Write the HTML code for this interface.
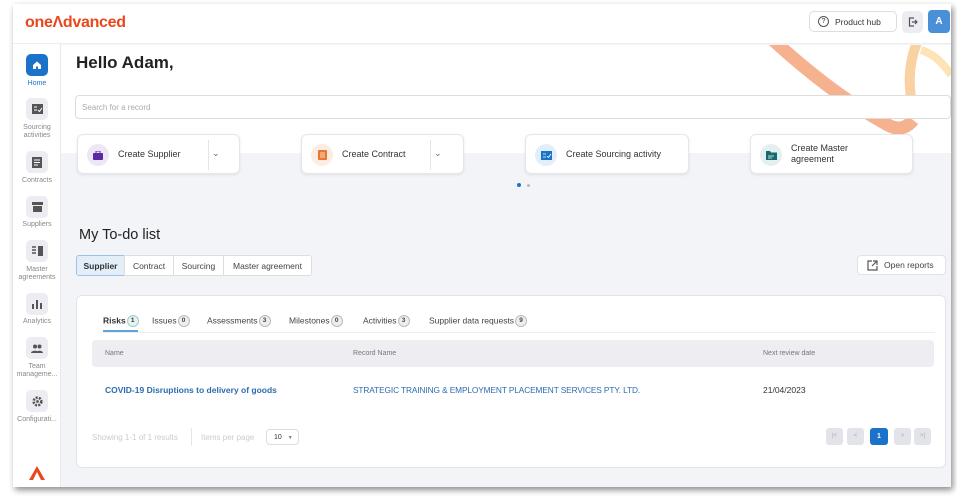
<!DOCTYPE html>
<html><head><style>
*{box-sizing:border-box;margin:0;padding:0}
body{width:957px;height:500px;background:#fff;font-family:"Liberation Sans",sans-serif;position:relative;overflow:hidden;color:#333}
.app{position:absolute;left:13px;top:4px;width:938px;height:483px;background:#f3f4f8;box-shadow:2px 3px 6px rgba(0,0,0,.45);overflow:hidden}
.hdr{position:absolute;left:0;top:0;width:938px;height:40px;background:#fff;border-bottom:1px solid #eee}
.side{position:absolute;left:0;top:40px;width:48px;height:443px;background:#fff;border-right:1px solid #e8e8ee}
.ab{position:absolute}
.si{position:absolute;left:13px;width:22px;height:22px;border-radius:5px;background:#ececf2;display:flex;align-items:center;justify-content:center}
.sl{position:absolute;left:0;width:48px;text-align:center;font-size:7px;color:#888;line-height:8px}
.card{position:absolute;top:130px;height:40px;background:#fff;border:1px solid #e6e6ea;border-radius:6px;box-shadow:0 1px 3px rgba(0,0,0,.08);font-size:9px;color:#333}
.ci{position:absolute;left:9px;top:9px;width:22px;height:22px;border-radius:50%;display:flex;align-items:center;justify-content:center}
.tab{position:absolute;top:251px;height:21px;border:1px solid #ddd;background:#fff;font-size:8.5px;display:flex;align-items:center;justify-content:center;color:#444}
.st{position:absolute;top:311px;font-size:8.5px;color:#444}
.b{display:inline-block;width:12px;height:12px;border:1px solid #bbb;border-radius:50%;background:#eee;font-size:6.5px;text-align:center;line-height:10px;font-weight:bold;margin-left:1px;vertical-align:middle}
.pg{position:absolute;top:424px;width:17px;height:17px;border-radius:3px;background:#e3e4ea;font-size:6px;color:#aaa;text-align:center;line-height:17px}
</style></head><body>
<div class="app">
 <div style="position:absolute;left:48px;top:41px;width:890px;height:108px;background:#fff"></div>
 <svg class="ab" style="left:700px;top:41px" width="238" height="100"><path d="M60 -5 Q120 50 175 80 Q190 88 200 75" stroke="#f4a37a" stroke-width="13" fill="none" opacity=".85"/><path d="M205 -5 Q190 30 202 70" stroke="#f9c58a" stroke-width="10" fill="none" opacity=".8"/><path d="M208 5 Q225 10 238 30" stroke="#fbd79a" stroke-width="8" fill="none" opacity=".7"/></svg>
 <div class="hdr">
  <div class="ab" style="left:12px;top:10px;font-size:16px;font-weight:bold;color:#e8481c;letter-spacing:-.3px">one&#923;dvanced</div>
  <div class="ab" style="left:796px;top:7px;width:88px;height:21px;border:1px solid #ddd;border-radius:5px;font-size:8.5px;color:#333;display:flex;align-items:center;padding-left:8px"><span style="display:inline-block;width:11px;height:11px;border:1.3px solid #555;border-radius:50%;font-size:7px;text-align:center;line-height:9px;margin-right:6px">?</span>Product hub</div>
  <div class="ab" style="left:889px;top:7px;width:21px;height:22px;background:#ececf2;border-radius:5px;display:flex;align-items:center;justify-content:center"><svg width="10" height="10"><path d="M6 1H1.5v8H6M4 5h5M7 3l2 2-2 2" stroke="#555" fill="none" stroke-width="1.2"/></svg></div>
  <div class="ab" style="left:915px;top:6px;width:22px;height:23px;background:#4a90d9;border-radius:4px;color:#fff;font-weight:bold;font-size:10px;text-align:center;line-height:23px">A</div>
 </div>
 <div class="side">
  <div class="si" style="top:10px;background:#1a73c8"><svg width="10" height="10"><path d="M1 5L5 1.5 9 5V9H6V6.5H4V9H1Z" fill="#fff"/></svg></div>
  <div class="sl" style="top:36px;color:#1a73c8">Home</div>
  <div class="si" style="top:54px"><svg width="11" height="10"><rect x="0" y="0" width="11" height="10" fill="#555"/><path d="M2 3h3M2 6h3M6 6l1.5 1.5L10 4" stroke="#fff" fill="none"/></svg></div>
  <div class="sl" style="top:80px">Sourcing<br>activities</div>
  <div class="si" style="top:107px"><svg width="10" height="11"><rect width="10" height="11" fill="#555"/><path d="M2 3h6M2 5.5h6M2 8h4" stroke="#fff"/></svg></div>
  <div class="sl" style="top:133px">Contracts</div>
  <div class="si" style="top:152px"><svg width="11" height="10"><path d="M0 0h11v3H0zM1 4h9v6H1z" fill="#555"/></svg></div>
  <div class="sl" style="top:177px">Suppliers</div>
  <div class="si" style="top:196px"><svg width="11" height="10"><path d="M0 1h4M0 4h4M0 7h4" stroke="#555" stroke-width="1.5"/><rect x="6" y="0" width="5" height="10" fill="#555"/></svg></div>
  <div class="sl" style="top:222px">Master<br>agreements</div>
  <div class="si" style="top:249px"><svg width="10" height="10"><path d="M1 10V5M5 10V1M9 10V4" stroke="#555" stroke-width="2"/></svg></div>
  <div class="sl" style="top:274px">Analytics</div>
  <div class="si" style="top:293px"><svg width="12" height="9"><circle cx="4" cy="2.5" r="2" fill="#555"/><circle cx="8.5" cy="2.5" r="2" fill="#555"/><path d="M0 9c0-3 8-3 8 0zM5 9c0-3 7-3 7 0z" fill="#555"/></svg></div>
  <div class="sl" style="top:319px">Team<br>manageme...</div>
  <div class="si" style="top:346px"><svg width="11" height="11"><circle cx="5.5" cy="5.5" r="3.8" fill="none" stroke="#555" stroke-width="2.6" stroke-dasharray="2 1.2"/><circle cx="5.5" cy="5.5" r="1.4" fill="#555"/></svg></div>
  <div class="sl" style="top:372px">Configurati...</div>
  <svg class="ab" style="left:16px;top:420px" width="16" height="16"><path d="M0 16L8 2 16 16H12L8 8 4 16Z" fill="#e8481c"/></svg>
 </div>
 <div class="ab" style="left:63px;top:49px;font-size:17px;font-weight:bold;color:#222">Hello Adam,</div>
 <div class="ab" style="left:62px;top:91px;width:876px;height:24px;background:#fff;border:1px solid #ddd;border-radius:4px;font-size:8px;color:#aaa;padding:7px 6px">Search for a record</div>
 <div class="card" style="left:64px;width:163px"><div class="ci" style="background:#ede6f7"><svg width="10" height="9"><rect y="2" width="10" height="7" rx="1" fill="#5b2a9e"/><rect x="3" y="0" width="4" height="3" fill="none" stroke="#5b2a9e"/></svg></div><span class="ab" style="left:40px;top:14px">Create Supplier</span><div class="ab" style="left:130px;top:5px;width:1px;height:30px;background:#e4e4e4"></div><span class="ab" style="left:134px;top:13px;color:#666;font-size:9px">&#8964;</span></div>
 <div class="card" style="left:288px;width:163px"><div class="ci" style="background:#fdece1"><svg width="9" height="10"><rect width="9" height="10" rx="1" fill="#e9772f"/><path d="M2 3h5M2 5h5M2 7h5" stroke="#fff" stroke-width=".8"/></svg></div><span class="ab" style="left:40px;top:14px">Create Contract</span><div class="ab" style="left:128px;top:5px;width:1px;height:30px;background:#e4e4e4"></div><span class="ab" style="left:132px;top:13px;color:#666;font-size:9px">&#8964;</span></div>
 <div class="card" style="left:512px;width:164px"><div class="ci" style="background:#e2eefb"><svg width="11" height="9"><rect width="11" height="9" fill="#1a73c8"/><path d="M2 3h3M2 6h3M6 5l1.5 1.5L10 3" stroke="#fff" fill="none" stroke-width=".8"/></svg></div><span class="ab" style="left:40px;top:14px">Create Sourcing activity</span></div>
 <div class="card" style="left:737px;width:163px"><div class="ci" style="background:#e3f0ef"><svg width="11" height="9"><path d="M0 0h4l1 1.5h6V9H0z" fill="#156b6b"/><path d="M2 5h6M2 7h4" stroke="#fff" stroke-width=".8"/></svg></div><span class="ab" style="left:40px;top:8px;line-height:11px">Create Master<br>agreement</span></div>
 <div class="ab" style="left:504px;top:179px;width:4px;height:4px;border-radius:50%;background:#1a73c8"></div>
 <div class="ab" style="left:514px;top:180px;width:3px;height:3px;border-radius:50%;background:#bbb"></div>
 <div class="ab" style="left:66px;top:223px;font-size:14.5px;color:#222">My To-do list</div>
 <div class="tab" style="left:63px;width:49px;background:#e3eef9;border-color:#9cc2e6;border-radius:3px 0 0 3px;font-weight:bold;color:#333">Supplier</div>
 <div class="tab" style="left:111px;width:50px">Contract</div>
 <div class="tab" style="left:160px;width:51px">Sourcing</div>
 <div class="tab" style="left:210px;width:89px;border-radius:0 3px 3px 0">Master agreement</div>
 <div class="ab" style="left:844px;top:251px;width:89px;height:20px;background:#fff;border:1px solid #e2e2e6;border-radius:4px;font-size:8.5px;color:#444;display:flex;align-items:center;padding-left:9px"><svg width="11" height="11" style="margin-right:6px"><path d="M5 1H1v9h9V6M6 1h4v4M10 1L5 6" stroke="#555" fill="none" stroke-width="1.2"/></svg>Open reports</div>
 <div class="ab" style="left:63px;top:291px;width:870px;height:173px;background:#fff;border:1px solid #e4e4e8;border-radius:6px"></div>
 <div class="st" style="left:90px;font-weight:bold;color:#333">Risks<span class="b" style="background:#e6f3f1;border-color:#9cc">1</span></div>
 <div class="ab" style="left:90px;top:326px;width:35px;height:2px;background:#5ea3dc"></div>
 <div class="ab" style="left:90px;top:328px;width:832px;height:1px;background:#eee"></div>
 <div class="st" style="left:139px">Issues<span class="b">0</span></div>
 <div class="st" style="left:194px">Assessments<span class="b">3</span></div>
 <div class="st" style="left:276px">Milestones<span class="b">0</span></div>
 <div class="st" style="left:350px">Activities<span class="b">3</span></div>
 <div class="st" style="left:416px">Supplier data requests<span class="b">9</span></div>
 <div class="ab" style="left:79px;top:336px;width:842px;height:27px;background:#ededf2;border-radius:4px;font-size:7px;color:#777">
  <span class="ab" style="left:13px;top:10px">Name</span><span class="ab" style="left:261px;top:10px">Record Name</span><span class="ab" style="left:671px;top:10px">Next review date</span></div>
 <div class="ab" style="left:92px;top:381px;font-size:8.5px;font-weight:bold;color:#2b6cb0">COVID-19 Disruptions to delivery of goods</div>
 <div class="ab" style="left:340px;top:381px;font-size:8.3px;color:#2b6cb0;letter-spacing:-.1px">STRATEGIC TRAINING &amp; EMPLOYMENT PLACEMENT SERVICES PTY. LTD.</div>
 <div class="ab" style="left:750px;top:381px;font-size:8.5px;color:#333">21/04/2023</div>
 <div class="ab" style="left:79px;top:429px;font-size:8px;color:#ccc">Showing 1-1 of 1 results</div>
 <div class="ab" style="left:178px;top:424px;width:1px;height:18px;background:#e6e6e6"></div>
 <div class="ab" style="left:188px;top:429px;font-size:8px;color:#ccc">Items per page</div>
 <div class="ab" style="left:253px;top:425px;width:33px;height:16px;border:1px solid #ddd;border-radius:4px;font-size:7px;color:#333;padding:4px 0 0 7px">10 <span style="font-size:5px;color:#777;margin-left:4px">&#9660;</span></div>
 <div class="pg" style="left:813px">|&lt;</div><div class="pg" style="left:834px">&lt;</div>
 <div class="pg" style="left:857px;width:18px;background:#1a73c8;color:#fff;font-weight:bold;font-size:7px">1</div>
 <div class="pg" style="left:881px">&gt;</div><div class="pg" style="left:901px">&gt;|</div>
</div>
</body></html>
